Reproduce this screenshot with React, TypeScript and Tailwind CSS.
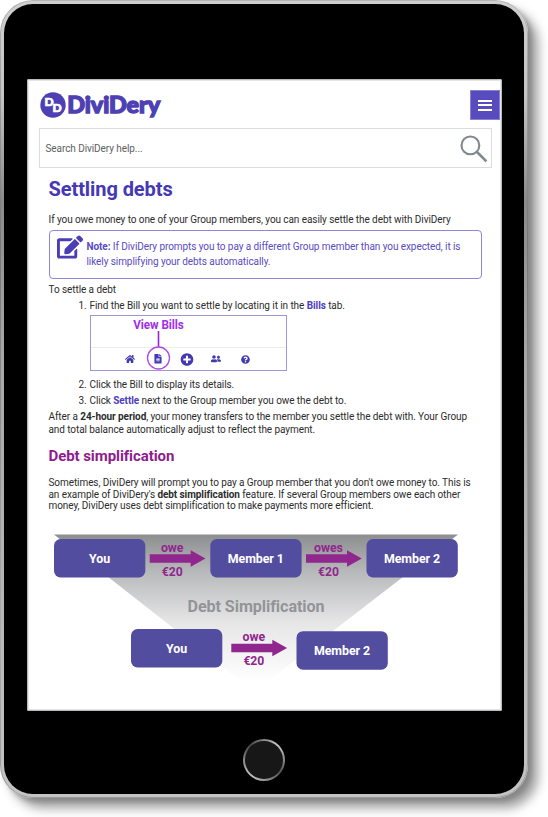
import type { ReactNode } from "react";
import { FaEdit, FaFileAlt, FaHome, FaPlusCircle, FaQuestionCircle, FaUserFriends } from "react-icons/fa";

function Logo() {
  return (
    <svg className="overflow-visible" width="124" height="34" viewBox="0 0 124 34" role="img" aria-label="DiviDery">
      <circle cx="13" cy="13" r="12.7" fill="#4d40b4" />
      <g fill="#fff" stroke="#fff" strokeWidth="0.7" fontFamily="Lato, sans-serif" fontWeight="900" fontSize="12">
        <text x="4.6" y="14.2">D<tspan x="12.6" y="19.6">D</tspan></text>
      </g>
      <text
        x="27.2" y="20.6" fontFamily="Lato, sans-serif" fontWeight="900" fontSize="22.5"
        textLength="93" lengthAdjust="spacingAndGlyphs" fill="#4d40b4" stroke="#4d40b4" strokeWidth="1.3"
      >
        DiviDery
      </text>
    </svg>
  );
}

function SearchIcon() {
  return (
    <svg className="mt-px" width="28" height="28" viewBox="0 0 28 28" fill="none" stroke="#7f8990">
      <circle cx="10.4" cy="10.4" r="8.9" strokeWidth="2.1" />
      <path d="M17 17 L26.4 26.4" strokeWidth="2.6" />
    </svg>
  );
}

function BillsPreview() {
  return (
    <div className="relative h-[56px] w-[197px] border border-[#9d96d8]">
      <div className="mt-[31px] h-px bg-[#ececf2]" />
      <div className="flex h-[22px] items-center pl-[34px] text-[#4338b0]">
        <FaHome className="w-[10px]" size={10} />
        <FaFileAlt className="ml-[18px] w-[10px]" size={9.5} />
        <FaPlusCircle className="ml-[17px] w-[14px]" size={13} />
        <FaUserFriends className="ml-[17px] w-[10px]" size={9.5} />
        <FaQuestionCircle className="ml-[20px] w-[9px]" size={9} />
      </div>
      <svg className="absolute -left-px -top-px" width="197" height="56" viewBox="0 0 197 56" fill="none">
        <text x="68.5" y="13.5" textAnchor="middle" textLength="50.5" lengthAdjust="spacingAndGlyphs" fontFamily="Roboto, sans-serif" fontWeight="700" fontSize="12" fill="#a22ee8">
          View Bills
        </text>
        <path d="M68.5 16 V32" stroke="#9b20e0" strokeWidth="1.6" />
        <circle cx="68.5" cy="43" r="11" stroke="#ad4be4" strokeWidth="1.3" />
      </svg>
    </div>
  );
}

function Box({ x, y, w, label }: { x: number; y: number; w: number; label: string }) {
  return (
    <g>
      <rect x={x} y={y} width="91.3" height="38.5" rx="6.5" fill="#534da0" />
      <text x={x + 45.5} y={y + 23.8} textAnchor="middle" textLength={w} lengthAdjust="spacingAndGlyphs" fill="#fff" fontSize="12.3">{label}</text>
    </g>
  );
}

function Arrow({ x, y, verb, w }: { x: number; y: number; verb: string; w: number }) {
  return (
    <g fill="#90278e">
      <path d={`M${x} ${y - 4.3}h41v-4l14.8 8.3l-14.8 8.3v-4h-41z`} />
      <text x={x + 22.5} y={y - 7} textAnchor="middle" textLength={w} lengthAdjust="spacingAndGlyphs" fontSize="12.2">{verb}</text>
      <text x={x + 22.5} y={y + 17.4} textAnchor="middle" textLength="20.8" lengthAdjust="spacingAndGlyphs" fontSize="12.2">€20</text>
    </g>
  );
}

function Diagram() {
  return (
    <svg width="406" height="150" viewBox="53 533 406 150" fontFamily="Roboto, sans-serif" fontWeight="700">
      <defs>
        <linearGradient id="fade" x1="0" y1="534" x2="0" y2="682" gradientUnits="userSpaceOnUse">
          <stop offset="0" stopColor="#8b8d8f" />
          <stop offset="0.25" stopColor="#b7b8ba" />
          <stop offset="0.6" stopColor="#e6e6e7" />
          <stop offset="1" stopColor="#ffffff" />
        </linearGradient>
      </defs>
      <path d="M54 534.5 H458 L267 682 H242 Z" fill="url(#fade)" />
      <Box x={54} y={539} w={21} label="You" />
      <Box x={210.3} y={539} w={56} label="Member 1" />
      <Box x={366.5} y={539} w={56} label="Member 2" />
      <Arrow x={149.7} y={558.5} verb="owe" w={22.5} />
      <Arrow x={306} y={558.5} verb="owes" w={28.8} />
      <text x="256" y="611.8" textAnchor="middle" textLength="137" lengthAdjust="spacingAndGlyphs" fontSize="16" fill="#929497">Debt Simplification</text>
      <Box x={131} y={629} w={21} label="You" />
      <Box x={296.5} y={631.2} w={56} label="Member 2" />
      <Arrow x={231.3} y={648} verb="owe" w={22.5} />
    </svg>
  );
}

function Step({ n, className, children }: { n: number; className: string; children: ReactNode }) {
  return (
    <li className={`flex ${className}`}>
      <span className="w-[41px] shrink-0 pr-[3px] text-right">{n}.</span>
      <div>{children}</div>
    </li>
  );
}

export default function App() {
  return (
    <div className="h-[817px] w-[548px] overflow-hidden bg-white font-['Roboto',sans-serif] text-[10px] tracking-[-0.077px] text-[#2c2c2c]">
      <div className="h-[798px] w-[528px] rounded-[33px] bg-[linear-gradient(180deg,#b4b4b4,#8d8d8d_20%,#777_30%,#aaa_80%,#999)] p-[1px] shadow-[4px_4px_4px_rgba(0,0,0,0.15),10px_10px_11px_rgba(0,0,0,0.38)]">
        <div className="h-[796px] w-[526px] rounded-[32px] bg-[linear-gradient(180deg,#cfcfcf,#c4c4c4_12%,#8a8a8a_25%,#a8a8a8_45%,#b8b8b8_80%,#c4c4c4)] p-[3px]">
          <div className="flex h-[790px] w-[520px] flex-col items-center rounded-[29px] bg-black pt-[75px]">
            <main className="h-[632px] w-[475px] rounded-[1px] border border-[#b9bbbe] bg-[#e4e5e8] p-px">
              <div className="h-[628px] overflow-hidden bg-white">
                <header className="flex h-[47px] pl-[11px] pt-[9px]">
                  <div className="pt-[2px]"><Logo /></div>
                  <button aria-label="Menu" className="ml-auto flex h-[30px] w-[30px] flex-col items-center justify-center gap-[2.5px] border border-[#8a80cf] bg-[#584bbd]">
                    <span className="h-[2px] w-[14px] bg-white" />
                    <span className="h-[2px] w-[14px] bg-white" />
                    <span className="h-[2px] w-[14px] bg-white" />
                  </button>
                </header>
                <div className="ml-[10px] flex h-[40px] w-[453px] items-center justify-between border border-[#dcdcdc] pl-[6px] pr-[3px]">
                  <span className="text-[#606060]">Search DiviDery help...</span>
                  <SearchIcon />
                </div>
                <article className="pl-[20px] pr-[18px]">
                  <h1 className="mt-[7px] h-[28px] text-[20px] font-bold leading-[28px] text-[#4538b4]">Settling debts</h1>
                  <p className="mt-[10px] h-[13px] whitespace-nowrap leading-[13px]">If you owe money to one of your Group members, you can easily settle the debt with DiviDery</p>
                  <aside className="mt-[4px] flex h-[49px] w-[433px] rounded-[4px] border border-[#9086d8] pl-[7px] pt-[3px] text-[#594bc2]">
                    <FaEdit size={26} className="shrink-0 text-[#4a3db5]" />
                    <p className="ml-[4px] mt-[5px] whitespace-nowrap leading-[15px]">
                      <b className="font-bold">Note:</b> If DiviDery prompts you to pay a different Group member than you expected, it is
                      <br />
                      likely simplifying your debts automatically.
                    </p>
                  </aside>
                  <p className="mt-[4px] h-[14px] leading-[14px]">To settle a debt</p>
                  <ol>
                    <Step n={1} className="h-[74px] leading-[18px]">
                      <p className="h-[18px]">Find the Bill you want to settle by locating it in the <b className="font-bold text-[#4c3ec0]">Bills</b> tab.</p>
                      <BillsPreview />
                    </Step>
                    <Step n={2} className="mt-[6px] h-[16px] leading-[16px]">Click the Bill to display its details.</Step>
                    <Step n={3} className="h-[16px] leading-[16px]">
                      Click <b className="font-bold text-[#4c3ec0]">Settle</b> next to the Group member you owe the debt to.
                    </Step>
                  </ol>
                  <p className="mt-[2px] whitespace-nowrap leading-[12.5px]">
                    After a <b className="font-bold">24-hour period</b>, your money transfers to the member you settle the debt with. Your Group
                    <br />
                    and total balance automatically adjust to reflect the payment.
                  </p>
                  <h2 className="mt-[10px] h-[20px] text-[15px] font-bold leading-[20px] text-[#8e1c8c]">Debt simplification</h2>
                  <p className="mt-[11px] whitespace-nowrap leading-[11.7px]">
                    Sometimes, DiviDery will prompt you to pay a Group member that you don't owe money to. This is
                    <br />
                    an example of DiviDery's <b className="font-bold">debt simplification</b> feature. If several Group members owe each other
                    <br />
                    money, DiviDery uses debt simplification to make payments more efficient.
                  </p>
                  <div className="ml-[4px] mt-[21px]"><Diagram /></div>
                </article>
              </div>
            </main>
            <button aria-label="Home" className="mt-[28px] h-[42px] w-[42px] rounded-full bg-[conic-gradient(from_0deg,#888,#c8c8c8_12%,#888_25%,#555_35%,#999_50%,#c4c4c4_60%,#888_75%,#444_88%,#888)] p-[2px]">
              <span className="block h-[38px] w-[38px] rounded-full bg-[#171717]" />
            </button>
          </div>
        </div>
      </div>
    </div>
  );
}
